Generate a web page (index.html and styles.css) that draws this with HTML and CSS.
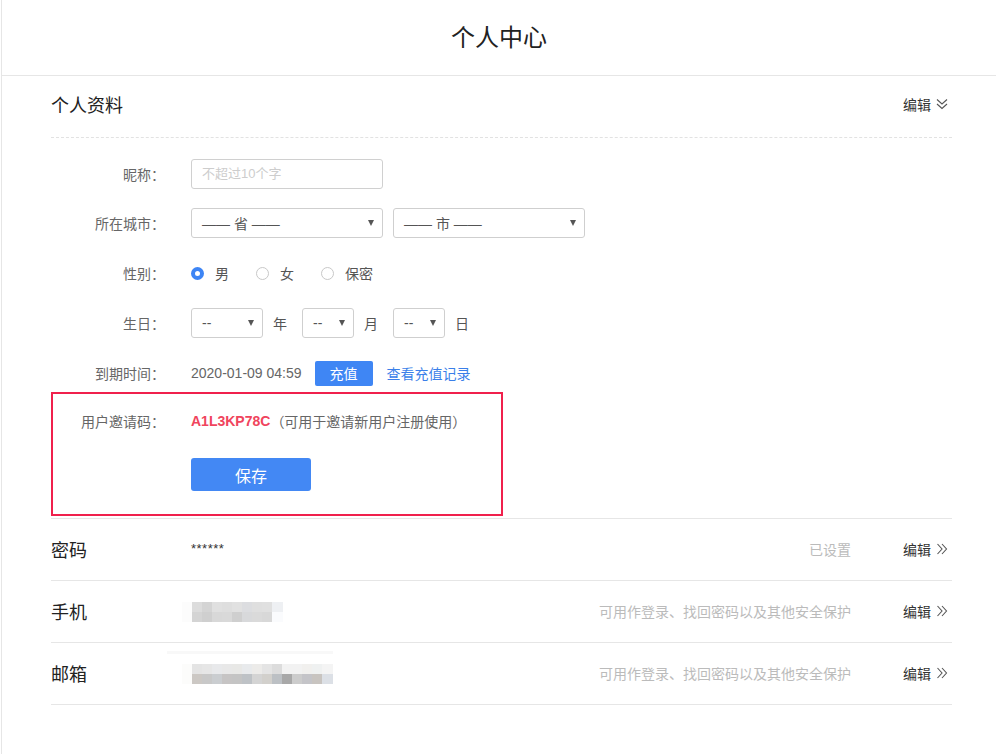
FILE: index.html
```html
<!DOCTYPE html>
<html lang="zh-CN">
<head>
<meta charset="utf-8">
<title>个人中心</title>
<link rel="stylesheet" href="styles.css">
</head>
<body>
<div class="page">
  <header class="top">
    <h1 class="title">个人中心</h1>
  </header>
  <main class="content">
    <section class="profile">
      <div class="sec-head">
        <h2 class="sec-title">个人资料</h2>
        <a class="edit">编辑
          <svg class="chev" width="12" height="12" viewBox="0 0 12 12"><polyline points="1,1.5 6,6 11,1.5"/><polyline points="1,6 6,10.5 11,6"/></svg>
        </a>
      </div>
      <div class="form">
        <div class="row first">
          <label class="lbl">昵称：</label>
          <div class="input">不超过10个字</div>
        </div>
        <div class="row">
          <label class="lbl">所在城市：</label>
          <div class="select wide"><span>—— 省 ——</span><i class="tri"></i></div>
          <div class="select wide"><span>—— 市 ——</span><i class="tri"></i></div>
        </div>
        <div class="row">
          <label class="lbl">性别：</label>
          <div class="radios">
            <span class="radio on"><i class="dot"></i>男</span>
            <span class="radio"><i class="dot"></i>女</span>
            <span class="radio"><i class="dot"></i>保密</span>
          </div>
        </div>
        <div class="row">
          <label class="lbl">生日：</label>
          <div class="select year"><span>--</span><i class="tri"></i></div>
          <span class="unit">年</span>
          <div class="select mon"><span>--</span><i class="tri"></i></div>
          <span class="unit">月</span>
          <div class="select mon"><span>--</span><i class="tri"></i></div>
          <span class="unit">日</span>
        </div>
        <div class="row">
          <label class="lbl">到期时间：</label>
          <span class="val">2020-01-09 04:59</span>
          <button class="btn-small">充值</button>
          <a class="link">查看充值记录</a>
        </div>
        <div class="highlight">
          <div class="row">
            <label class="lbl">用户邀请码：</label>
            <span class="code">A1L3KP78C</span><span class="val">（可用于邀请新用户注册使用）</span>
          </div>
          <div class="row save-row">
            <span class="lbl"></span>
            <button class="btn-save">保存</button>
          </div>
        </div>
      </div>
    </section>
    <section class="security">
      <div class="srow">
        <div class="sname">密码</div>
        <div class="sval stars">******</div>
        <div class="snote">已设置</div>
        <a class="edit sedit">编辑
          <svg class="chev" width="12" height="12" viewBox="0 0 12 12"><polyline points="1.5,1 6,6 1.5,11"/><polyline points="6,1 10.5,6 6,11"/></svg>
        </a>
      </div>
      <div class="srow">
        <div class="sname">手机</div>
        <div class="sval"><div class="blur blur-phone"></div></div>
        <div class="snote">可用作登录、找回密码以及其他安全保护</div>
        <a class="edit sedit">编辑
          <svg class="chev" width="12" height="12" viewBox="0 0 12 12"><polyline points="1.5,1 6,6 1.5,11"/><polyline points="6,1 10.5,6 6,11"/></svg>
        </a>
      </div>
      <div class="srow">
        <div class="sname">邮箱</div>
        <div class="sval"><div class="blur-line"></div><div class="blur blur-mail"></div></div>
        <div class="snote">可用作登录、找回密码以及其他安全保护</div>
        <a class="edit sedit">编辑
          <svg class="chev" width="12" height="12" viewBox="0 0 12 12"><polyline points="1.5,1 6,6 1.5,11"/><polyline points="6,1 10.5,6 6,11"/></svg>
        </a>
      </div>
    </section>
  </main>
</div>
</body>
</html>
```
FILE: styles.css
```css
* { box-sizing: border-box; }
html, body { margin: 0; padding: 0; background: #fff; }
body {
  font-family: "Liberation Sans", "Noto Sans CJK SC", sans-serif;
  color: #333;
  font-size: 14px;
}
.page {
  margin-left: 1px;
  border-left: 1px solid #e6e6e6;
  min-height: 754px;
}
.top {
  height: 76px;
  border-bottom: 1px solid #e6e6e6;
  display: flex;
  align-items: center;
  justify-content: center;
}
.title {
  margin: 0;
  font-size: 24px;
  font-weight: normal;
  color: #222;
  position: relative;
  top: -2px;
}
.content {
  padding: 0 44px 0 49px;
}
.sec-head {
  height: 62px;
  padding-bottom: 6px;
  border-bottom: 1px dashed #e2e2e2;
  display: flex;
  align-items: center;
  justify-content: space-between;
}
.sec-title {
  margin: 0;
  font-size: 18px;
  font-weight: normal;
  color: #222;
}
.edit {
  display: flex;
  align-items: center;
  gap: 5px;
  font-size: 14px;
  color: #333;
  margin-right: 4px;
}
.chev { fill: none; stroke: #555; stroke-width: 1.1; }
.form { padding-top: 21px; }
.row {
  display: flex;
  align-items: center;
  height: 30px;
  margin-bottom: 20px;
}
.row.first { margin-bottom: 19px; }
.lbl {
  width: 114px;
  text-align: right;
  color: #666;
  font-size: 14px;
  margin-right: 26px;
  flex: none;
}
.input {
  width: 192px;
  height: 30px;
  border: 1px solid #d0d0d0;
  border-radius: 3px;
  padding-left: 10px;
  line-height: 28px;
  color: #cdcdcd;
  font-size: 13px;
}
.select {
  height: 30px;
  border: 1px solid #cfcfcf;
  border-radius: 3px;
  display: flex;
  align-items: center;
  justify-content: space-between;
  padding: 0 8px 0 10px;
  color: #555;
  font-size: 14px;
}
.select.wide { width: 192px; margin-right: 10px; }
.select.year { width: 72px; }
.select.mon { width: 52px; }
.tri {
  width: 0; height: 0;
  border-left: 3.5px solid transparent;
  border-right: 3.5px solid transparent;
  border-top: 6px solid #555;
}
.unit { color: #555; margin: 0 15px 0 10px; }
.unit:last-child { margin-right: 0; }
.radios { display: flex; align-items: center; }
.radio {
  display: flex;
  align-items: center;
  color: #555;
  margin-right: 27px;
}
.dot {
  width: 13px; height: 13px;
  border: 1px solid #c8c8c8;
  border-radius: 50%;
  margin-right: 11px;
  display: inline-block;
}
.radio.on .dot { border: 4px solid #3d85f5; }
.val { color: #666; font-size: 14px; }
.btn-small {
  margin-left: 13px;
  width: 58px;
  height: 25px;
  border: 0;
  border-radius: 2px;
  background: #3f86f4;
  color: #fff;
  font-family: inherit;
  font-size: 14px;
  padding: 0;
}
.link { margin-left: 14px; color: #3a7fe9; }
.highlight {
  width: 452px;
  height: 124px;
  border: 2px solid #f0204c;
  margin-top: -16px;
  padding-top: 12px;
}
.highlight .lbl { width: 112px; }
.code { color: #f0445d; font-weight: bold; font-size: 14px; }
.save-row { height: 33px; margin: 0; margin-top: 22px; }
.btn-save {
  width: 120px;
  height: 33px;
  border: 0;
  border-radius: 3px;
  background: #4388f4;
  color: #fff;
  font-family: inherit;
  font-size: 16px;
  padding: 0;
}
.security { margin-top: 2px; border-top: 1px solid #e6e6e6; }
.srow {
  height: 62px;
  padding-bottom: 2px;
  border-bottom: 1px solid #e6e6e6;
  display: flex;
  align-items: center;
}
.sname { width: 140px; font-size: 18px; color: #222; flex: none; }
.sval { flex: 1; position: relative; height: 20px; display: flex; align-items: center; }
.stars { font-size: 13px; color: #333; letter-spacing: 0.5px; }
.snote { color: #bbb; font-size: 14px; }
.sedit { margin-left: 52px; margin-right: 4px; }
.blur { height: 20px; margin-left: -9px; position: relative; top: 1px; }
.blur-phone {
  width: 101px;
  background:
    linear-gradient(90deg, #fcfcfc 0 10px, #dcdcdc 10px 20px, #d4d4d4 20px 30px, #e0e0e0 30px 40px, #dedede 40px 50px, #e1e1e1 50px 60px, #dcdde0 60px 70px, #dfdfdf 70px 80px, #e0e0e0 80px 90px, #eef0f3 90px 101px) top / 100% 10px no-repeat,
    linear-gradient(90deg, #fcfcfc 0 10px, #d4d4d4 10px 20px, #cfcfcf 20px 30px, #d8d8d8 30px 40px, #d9d9d9 40px 50px, #cfcfcf 50px 60px, #d8d9db 60px 70px, #dadada 70px 80px, #d8d8d8 80px 90px, #fafbfd 90px 101px) bottom / 100% 10px no-repeat;
}
.blur-mail {
  width: 151px;
  background:
    linear-gradient(90deg, #fcfcfb 0 10px, #e4e4e4 10px 20px, #e6e6e6 20px 30px, #e8e9eb 30px 40px, #e8e8e8 40px 50px, #e8e8e6 50px 60px, #e8eaec 60px 70px, #ecebe9 70px 80px, #e4e4e4 80px 90px, #dcdcdc 90px 100px, #f2f2f2 100px 110px, #f2f2f2 110px 120px, #f1f0ee 120px 130px, #eff1f1 130px 140px, #f4f4f4 140px 151px) top / 100% 10px no-repeat,
    linear-gradient(90deg, #fcfcfb 0 10px, #ccc8c4 10px 20px, #c8c8c8 20px 30px, #cacdd0 30px 40px, #c6c4c4 40px 50px, #c4c4c4 50px 60px, #bec2c6 60px 70px, #d4d4d4 70px 80px, #d2d0cc 80px 90px, #bcc0c4 90px 100px, #a8a8a8 100px 110px, #cccccc 110px 120px, #c4c4c8 120px 130px, #c8c4c0 130px 140px, #dce0e6 140px 151px) bottom / 100% 10px no-repeat;
}
.blur-line {
  position: absolute;
  left: -24px;
  top: -12px;
  width: 166px;
  height: 3px;
  background: #f8f8f8;
}
```
